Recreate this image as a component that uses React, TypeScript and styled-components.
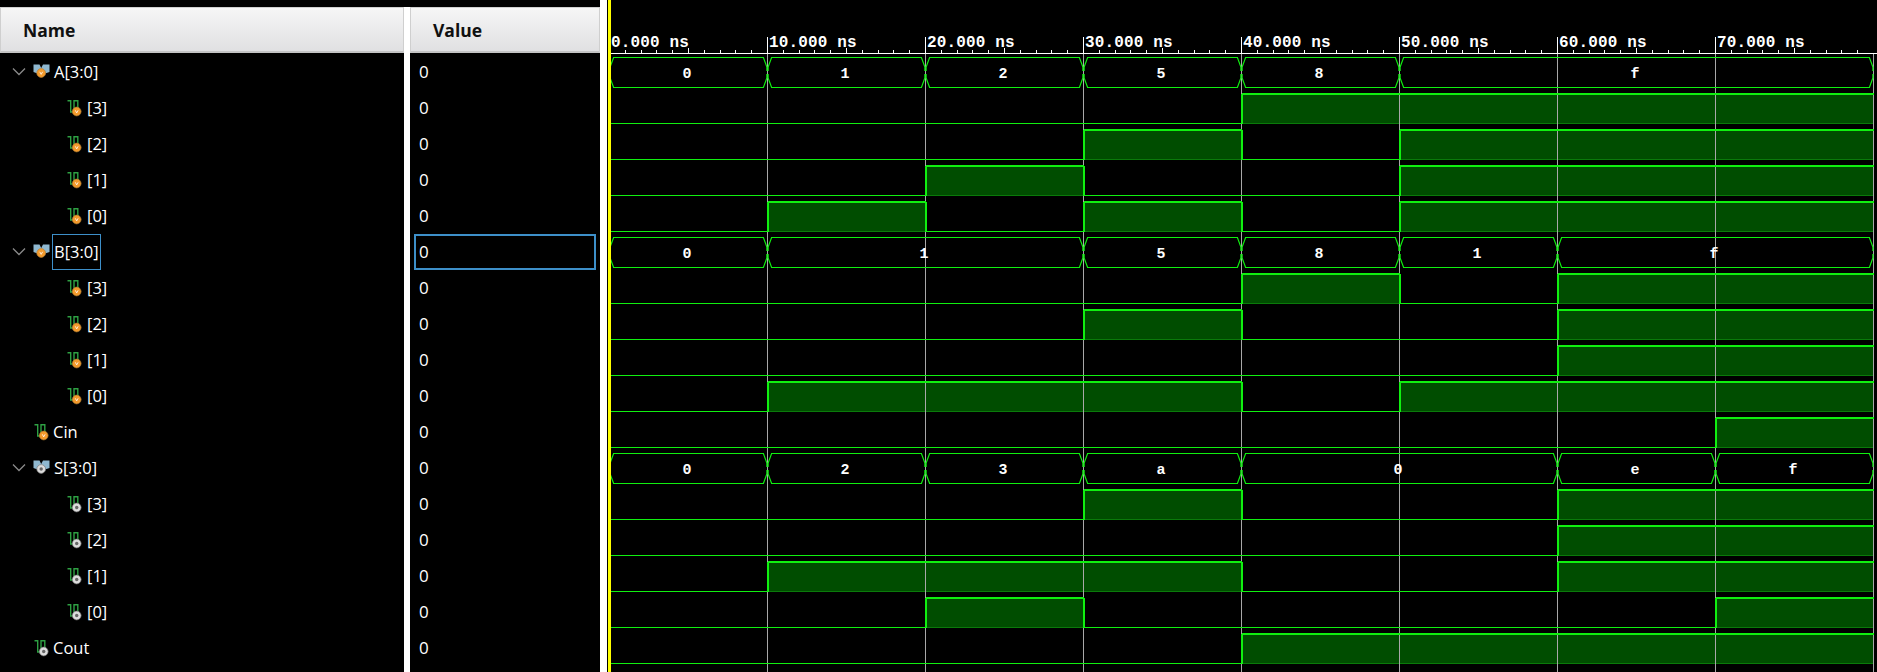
import React from "react";
import styled, { createGlobalStyle } from "styled-components";

const GlobalStyle = createGlobalStyle`
  html, body {
    margin: 0;
    padding: 0;
    background: #000;
    overflow: hidden;
  }
`;

interface SignalRow {
  name: string;
  kind: "bus" | "bit";
  port: "in" | "out";
  indent: boolean;
  values: number[];
}

const A = [0, 1, 2, 5, 8, 15, 15, 15];
const B = [0, 1, 1, 5, 8, 1, 15, 15];
const CIN = [0, 0, 0, 0, 0, 0, 0, 1];
const S = [0, 2, 3, 10, 0, 0, 14, 15];
const COUT = [0, 0, 0, 0, 1, 1, 1, 1];

const expand = (name: string, port: "in" | "out", values: number[]): SignalRow[] => [
  { name: `${name}[3:0]`, kind: "bus", port, indent: false, values },
  ...[3, 2, 1, 0].map((bit) => ({
    name: `[${bit}]`,
    kind: "bit" as const,
    port,
    indent: true,
    values: values.map((v) => (v >> bit) & 1),
  })),
];

const rows: SignalRow[] = [
  ...expand("A", "in", A),
  ...expand("B", "in", B),
  { name: "Cin", kind: "bit", port: "in", indent: false, values: CIN },
  ...expand("S", "out", S),
  { name: "Cout", kind: "bit", port: "out", indent: false, values: COUT },
];

const FOCUSED = 5;
const ROW_H = 36;
const TICK = 158;
const X0 = 1; // time zero, inside the wave svg
const BRIGHT = "#10f010";

const Page = styled.div`
  display: flex;
  width: 1877px;
  height: 672px;
  background: #000;
  font-family: "Open Sans", "Noto Sans", sans-serif;
  color: #fff;
  overflow: hidden;
`;

const Column = styled.div<{ $width: number }>`
  width: ${(p) => p.$width}px;
  flex: none;
  padding-top: 7px;
  box-sizing: border-box;
`;

const HeaderCell = styled.div<{ $pad: number }>`
  height: 46px;
  box-sizing: border-box;
  padding-left: ${(p) => p.$pad}px;
  display: flex;
  align-items: center;
  background: linear-gradient(#f6f6f6, #e0e0e2);
  border: 1px solid #cfcfcf;
  border-bottom: 2px solid #c4c4c4;
  color: #101010;
  font-size: 17.5px;
  font-weight: 700;
`;

const Gutter = styled.div<{ $width: number; $top: number }>`
  width: ${(p) => p.$width}px;
  flex: none;
  margin-top: ${(p) => p.$top}px;
  background: #fff;
`;

const RowList = styled.div`
  padding-top: 1px;
`;

const NameRow = styled.div<{ $indent: boolean; $expander: boolean }>`
  height: ${ROW_H}px;
  display: flex;
  align-items: center;
  padding-left: ${(p) => (p.$indent ? 67 : p.$expander ? 12 : 34)}px;
  font-size: 16.5px;
`;

const Expander = styled.svg`
  width: 14px;
  height: 10px;
  margin-right: 7px;
  flex: none;
`;

const NameLabel = styled.span<{ $focused: boolean; $gap: number }>`
  margin-left: ${(p) => p.$gap}px;
  padding: 0 1px;
  height: 36px;
  line-height: 34px;
  box-sizing: border-box;
  border: 1px solid ${(p) => (p.$focused ? "#3d8fc9" : "transparent")};
`;

const ValueRow = styled.div`
  height: ${ROW_H}px;
  display: flex;
  align-items: center;
  padding: 0 4px;
  font-size: 17px;
`;

const ValueBox = styled.div<{ $focused: boolean }>`
  flex: 1;
  height: ${ROW_H}px;
  padding-left: 3px;
  box-sizing: border-box;
  line-height: 32px;
  border: 2px solid ${(p) => (p.$focused ? "#3d8fc9" : "transparent")};
`;

const WavePane = styled.div`
  flex: none;
  width: 1269px;
  margin-left: 1px;
  height: 672px;
`;

const WaveSvg = styled.svg`
  display: block;
  flex: none;
  text {
    font-family: "Liberation Mono", monospace;
    font-weight: 700;
    fill: #fff;
  }
`;

const IconSvg = styled.svg`
  flex: none;
`;

const BusIcon = ({ port }: { port: "in" | "out" }) => (
  <IconSvg width="17" height="16" viewBox="0 0 17 16">
    <path d="M0.5 0.5H6.5L8.2 4L10 0.5H16.5V8L12 9.5H4.5L0.5 8Z" fill="#8fb8d0" />
    <circle cx="8.2" cy="9" r="4.4" fill={port === "in" ? "#f39a2c" : "#dcdcdc"} stroke={port === "in" ? "#b98034" : "#7a7a7a"} strokeWidth="0.7" />
    {port === "in" ? <path d="M6.8 7.8L8.2 10.4L9.6 7.8" fill="none" stroke="#fff" strokeWidth="0.8" /> : <circle cx="8.2" cy="9" r="1.7" fill="#666" />}
  </IconSvg>
);

const BitIcon = ({ port }: { port: "in" | "out" }) => (
  <IconSvg width="15" height="17" viewBox="0 0 15 17">
    <path d="M0.5 0.7H3.7V12H7V0.7H10.8V8" fill="none" stroke="#2ea043" strokeWidth="1.4" />
    <circle cx="9.7" cy="11.5" r="4.4" fill={port === "in" ? "#f39a2c" : "#dcdcdc"} stroke={port === "in" ? "#a8752c" : "#7a7a7a"} strokeWidth="0.7" />
    {port === "in" ? <path d="M8.3 10.3L9.7 12.9L11.1 10.3" fill="none" stroke="#fff" strokeWidth="0.8" /> : <circle cx="9.7" cy="11.5" r="1.7" fill="#666" />}
  </IconSvg>
);

const timeX = (t: number) => X0 + TICK * t + 0.5;

function Ruler() {
  const minor: number[] = [];
  for (let i = 0; i < 80; i++) if (i % 10 !== 0) minor.push(i);
  return (
    <g shapeRendering="crispEdges">
      <line x1={3} x2={1269} y1={53.5} y2={53.5} stroke="#fff" />
      {minor.map((i) => {
        const x = Math.round(X0 + (TICK * i) / 10) + 0.5;
        return <line key={i} x1={x} x2={x} y1={i % 5 === 0 ? 48 : 50} y2={53} stroke="#fff" />;
      })}
      {[1, 2, 3, 4, 5, 6, 7].map((k) => (
        <line key={k} x1={timeX(k)} x2={timeX(k)} y1={37} y2={53} stroke="#fff" />
      ))}
    </g>
  );
}

function BusWave({ top, values }: { top: number; values: number[] }) {
  const bottom = top + 30;
  const mid = top + 15;
  const segs: { from: number; to: number; value: number }[] = [];
  values.forEach((value, t) => {
    const last = segs[segs.length - 1];
    if (last && last.value === value) last.to = t + 1;
    else segs.push({ from: t, to: t + 1, value });
  });
  return (
    <g>
      {segs.map((s) => {
        const l = timeX(s.from) + 0.6;
        const r = timeX(s.to) - 0.6;
        const d = [
          `M${l} ${mid - 1}L${l} ${mid - 5}L${l + 3.5} ${top + 0.5}L${r - 3.5} ${top + 0.5}L${r} ${mid - 5}L${r} ${mid - 1}`,
          `M${l} ${mid + 2}L${l} ${mid + 6}L${l + 3.5} ${bottom + 0.5}L${r - 3.5} ${bottom + 0.5}L${r} ${mid + 6}L${r} ${mid + 2}`,
        ].join("");
        return (
          <g key={s.from}>
            <path d={d} fill="none" stroke={BRIGHT} strokeWidth="1.2" />
            <text x={(l + r) / 2 - 1.5} y={top + 21} fontSize="15" textAnchor="middle">
              {s.value.toString(16)}
            </text>
          </g>
        );
      })}
    </g>
  );
}

function BitFill({ top, values }: { top: number; values: number[] }) {
  return (
    <g shapeRendering="crispEdges">
      {values.map((v, t) =>
        v ? <rect key={t} x={timeX(t)} y={top} width={TICK} height={30} fill="#004d00" /> : null,
      )}
      {values.map((v, t) =>
        v ? <line key={t} x1={timeX(t)} x2={timeX(t + 1)} y1={top + 30.5} y2={top + 30.5} stroke="#0a7a0a" /> : null,
      )}
    </g>
  );
}

function BitEdges({ top, values }: { top: number; values: number[] }) {
  const high = top + 0.5;
  const low = top + 30.5;
  return (
    <g shapeRendering="crispEdges">
      {values.map((v, t) => (
        <g key={t}>
          {v ? (
            <rect x={timeX(t)} y={top} width={TICK} height={2} fill={BRIGHT} />
          ) : (
            <line x1={timeX(t)} x2={timeX(t + 1)} y1={low} y2={low} stroke={BRIGHT} />
          )}
          {t > 0 && values[t - 1] !== v ? (
            <rect x={timeX(t) - 0.5} y={high} width={2} height={30} fill={BRIGHT} />
          ) : null}
        </g>
      ))}
    </g>
  );
}

function Waveform() {
  const tops = rows.map((_, i) => 57 + i * ROW_H);
  return (
    <WaveSvg width={1269} height={672} viewBox="0 0 1269 672">
      {rows.map((r, i) =>
        r.kind === "bit" ? <BitFill key={i} top={tops[i]} values={r.values} /> : null,
      )}
      <g shapeRendering="crispEdges">
        {[1, 2, 3, 4, 5, 6, 7, 8].map((k) => (
          <line key={k} x1={timeX(k)} x2={timeX(k)} y1={53} y2={672} stroke="#a8a8a8" />
        ))}
      </g>
      {rows.map((r, i) =>
        r.kind === "bus" ? (
          <BusWave key={i} top={tops[i]} values={r.values} />
        ) : (
          <BitEdges key={i} top={tops[i]} values={r.values} />
        ),
      )}
      <Ruler />
      {[0, 1, 2, 3, 4, 5, 6, 7].map((k) => (
        <text key={k} x={k * TICK + 3} y={47} fontSize="16" letterSpacing="0.15">
          {`${k * 10}.000 ns`}
        </text>
      ))}
      <rect x={0} y={0} width={3} height={672} fill="#ffff00" />
    </WaveSvg>
  );
}

export default function App() {
  return (
    <>
      <GlobalStyle />
      <Page>
        <Column $width={404}>
          <HeaderCell $pad={22}>Name</HeaderCell>
          <RowList>
            {rows.map((r, i) => (
              <NameRow key={i} $indent={r.indent} $expander={r.kind === "bus"}>
                {r.kind === "bus" ? (
                  <>
                    <Expander viewBox="0 0 14 10">
                      <path d="M1 1.5L7 7.5L13 1.5" fill="none" stroke="#8a8a8a" strokeWidth="1.3" />
                    </Expander>
                    <BusIcon port={r.port} />
                  </>
                ) : (
                  <BitIcon port={r.port} />
                )}
                <NameLabel $focused={i === FOCUSED} $gap={r.kind === "bus" ? 2 : r.indent ? 3 : 2}>
                  {r.name}
                </NameLabel>
              </NameRow>
            ))}
          </RowList>
        </Column>
        <Gutter $width={6} $top={7} />
        <Column $width={190}>
          <HeaderCell $pad={22}>Value</HeaderCell>
          <RowList>
            {rows.map((_, i) => (
              <ValueRow key={i}>
                <ValueBox $focused={i === FOCUSED}>0</ValueBox>
              </ValueRow>
            ))}
          </RowList>
        </Column>
        <Gutter $width={7} $top={0} />
        <WavePane>
          <Waveform />
        </WavePane>
      </Page>
    </>
  );
}
